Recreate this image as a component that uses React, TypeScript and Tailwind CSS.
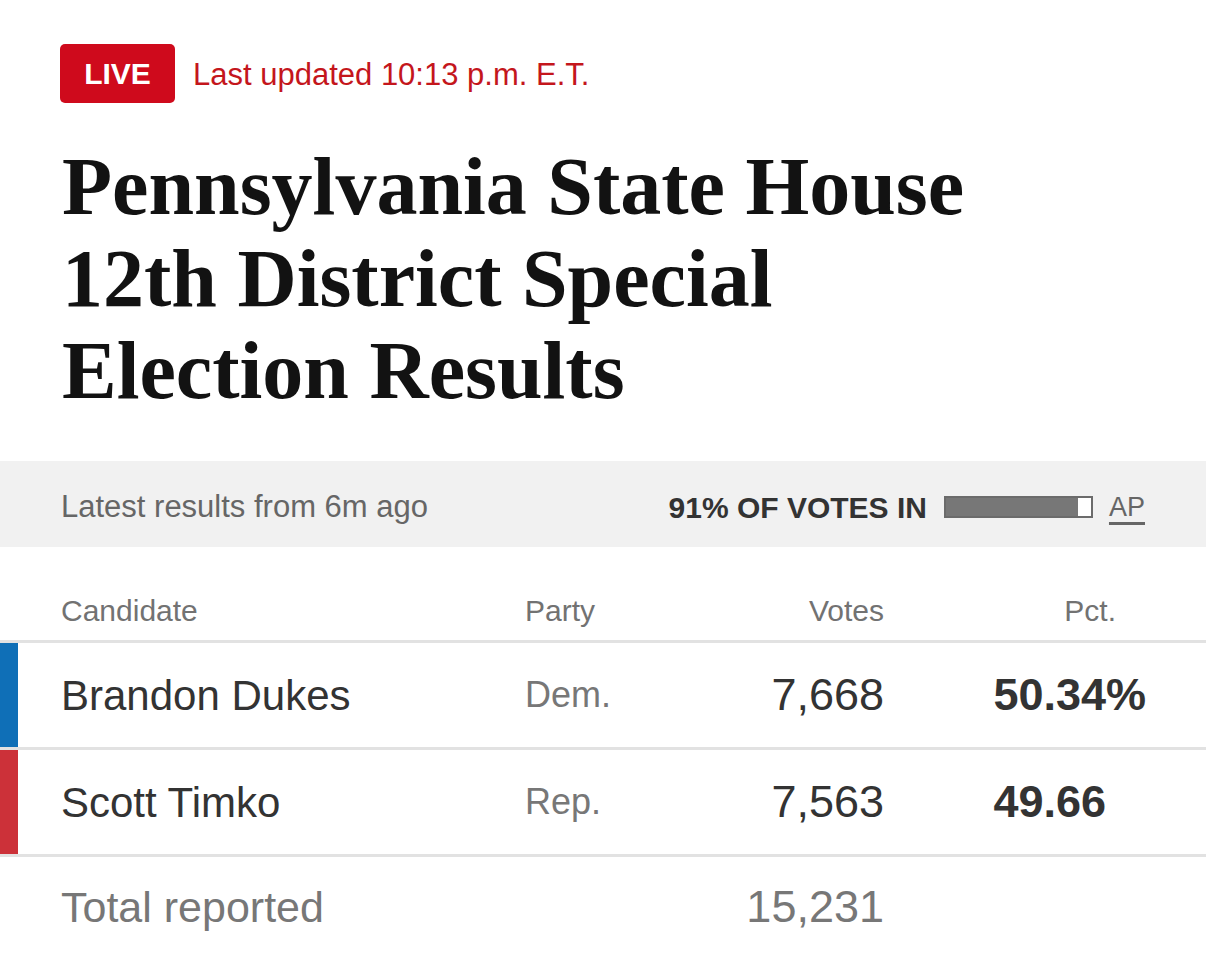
import React from 'react';

interface Candidate {
  name: string;
  party: string;
  votes: string;
  pct: string;
  showPercent: boolean;
  color: string;
}

const candidates: Candidate[] = [
  { name: 'Brandon Dukes', party: 'Dem.', votes: '7,668', pct: '50.34', showPercent: true, color: 'bg-[#0f6fb7]' },
  { name: 'Scott Timko', party: 'Rep.', votes: '7,563', pct: '49.66', showPercent: false, color: 'bg-[#cc3139]' },
];

const sans = "font-['Liberation_Sans','Arial',sans-serif]";

const App: React.FC = () => {
  return (
    <div className={`w-[1206px] h-[960px] overflow-hidden bg-white ${sans}`}>
      {/* Header */}
      <div className="px-[60px] pt-[44px]">
        <div className="flex items-center gap-[18px]">
          <span className="flex h-[59px] w-[115px] items-center justify-center rounded-[5px] bg-[#cf0a1c] text-[30px] font-bold text-white">
            LIVE
          </span>
          <span className="pt-[2px] text-[31px] leading-none text-[#c4161c]">Last updated 10:13 p.m. E.T.</span>
        </div>
        <h1 className="mt-[38px] pl-[2px] font-['Liberation_Serif','Times_New_Roman',serif] text-[82px] font-bold leading-[92px] text-[#121212]">
          Pennsylvania State House
          <br />
          12th District Special
          <br />
          Election Results
        </h1>
      </div>

      {/* Reporting band */}
      <div className="mt-[44px] flex h-[86px] items-center justify-between bg-[#f1f1f1] pl-[61px] pr-[61px] pt-[6px]">
        <span className="text-[31px] text-[#666666]">Latest results from 6m ago</span>
        <div className="flex items-center">
          <span className="text-[30px] font-bold text-[#333333]">91% OF VOTES IN</span>
          <div className="ml-[17px] h-[22px] w-[149px] border-2 border-[#6b6b6b] bg-white">
            <div className="h-full w-[91%] bg-[#777777]" />
          </div>
          <span className="ml-[16px] text-[27px] text-[#666666] underline decoration-[3px] underline-offset-[6px]">AP</span>
        </div>
      </div>

      {/* Table header */}
      <div className="grid h-[96px] grid-cols-[464px_160px_199px_232px] items-end border-b-[3px] border-[#e2e2e2] pb-[13px] pl-[61px] text-[30px] leading-[32px] text-[#727272]">
        <span>Candidate</span>
        <span>Party</span>
        <span className="text-right">Votes</span>
        <span className="text-right">Pct.</span>
      </div>

      {/* Candidate rows */}
      {candidates.map((c) => (
        <div key={c.name} className="flex h-[107px] border-b-[3px] border-[#e2e2e2]">
          <div className={`w-[18px] ${c.color}`} />
          <div className="grid flex-1 grid-cols-[464px_160px_199px_222px] items-center pl-[43px]">
            <span className="text-[42px] text-[#333333]">{c.name}</span>
            <span className="text-[36px] text-[#777777]">{c.party}</span>
            <span className="text-right text-[45px] text-[#333333]">{c.votes}</span>
            <span className="text-right text-[45px] font-bold text-[#333333]">
              <span className="relative">
                {c.pct}
                {c.showPercent && <span className="absolute left-full">%</span>}
              </span>
            </span>
          </div>
        </div>
      ))}

      {/* Total */}
      <div className="grid h-[100px] grid-cols-[464px_160px_199px] items-center pl-[61px]">
        <span className="text-[43px] text-[#777777]">Total reported</span>
        <span />
        <span className="text-right text-[45px] text-[#777777]">15,231</span>
      </div>
    </div>
  );
};

export default App;
